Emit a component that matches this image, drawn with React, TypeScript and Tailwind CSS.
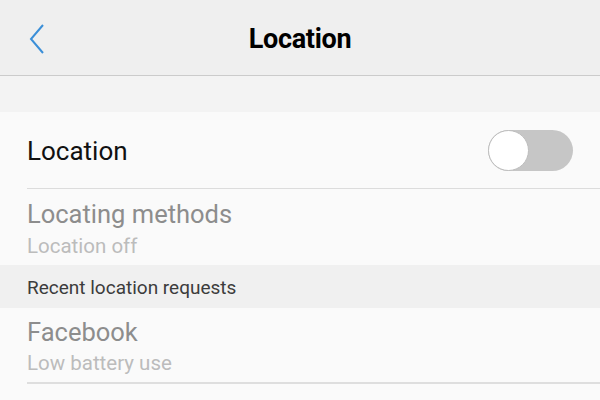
import React, { useState } from "react";

const Toggle = ({ on, onClick }: { on: boolean; onClick: () => void }) => {
  return (
    <button
      onClick={onClick}
      className={`relative w-[85px] h-[41px] rounded-full ${on ? "bg-[#3b8fd8]" : "bg-[#c6c6c6]"}`}
    >
      <span
        className={`absolute top-0 ${on ? "right-0" : "left-0"} w-[41px] h-[41px] rounded-full bg-white border border-[#bdbdbd]`}
      />
    </button>
  );
};

const App = () => {
  const [enabled, setEnabled] = useState(false);

  return (
    <div className="w-[600px] h-[400px] overflow-hidden bg-[#fafafa] font-['Roboto',sans-serif]">
      <div className="h-[76px] bg-[#efefef] border-b border-[#cbcbcb] flex items-center relative">
        <svg className="absolute left-[28px] top-[23px]" width="18" height="32" viewBox="0 0 18 32">
          <path d="M15 2 L3 16 L15 30" fill="none" stroke="#3b8fd8" strokeWidth="2" />
        </svg>
        <div className="w-full text-center text-[27px] font-bold text-black tracking-[-0.3px] pt-[3px]">Location</div>
      </div>
      <div className="h-[36px] bg-[#f3f3f3]" />
      <div className="pl-[27px]">
        <div className="h-[77px] flex items-center justify-between pr-[27px] border-b border-[#dcdcdc]">
          <span className="text-[26px] text-[#111] pt-[2px]">Location</span>
          <Toggle on={enabled} onClick={() => setEnabled(!enabled)} />
        </div>
        <div className="h-[76px] flex flex-col justify-center pt-[7px]">
          <span className="text-[25.5px] text-[#8d8d8d] leading-[31px]">Locating methods</span>
          <span className="text-[20.5px] text-[#bcbcbc] leading-[31px] mt-[1px]">Location off</span>
        </div>
      </div>
      <div className="h-[43px] bg-[#f0f0f0] flex items-center pl-[27px] pt-[4px]">
        <span className="text-[19px] text-[#3c3c3c]">Recent location requests</span>
      </div>
      <div className="pl-[27px]">
        <div className="h-[76px] flex flex-col justify-center pt-[6px] border-b-2 border-[#dedede]">
          <span className="text-[25.5px] text-[#8d8d8d] leading-[31px]">Facebook</span>
          <span className="text-[20.5px] text-[#bcbcbc] leading-[31px]">Low battery use</span>
        </div>
      </div>
    </div>
  );
};

export default App;
